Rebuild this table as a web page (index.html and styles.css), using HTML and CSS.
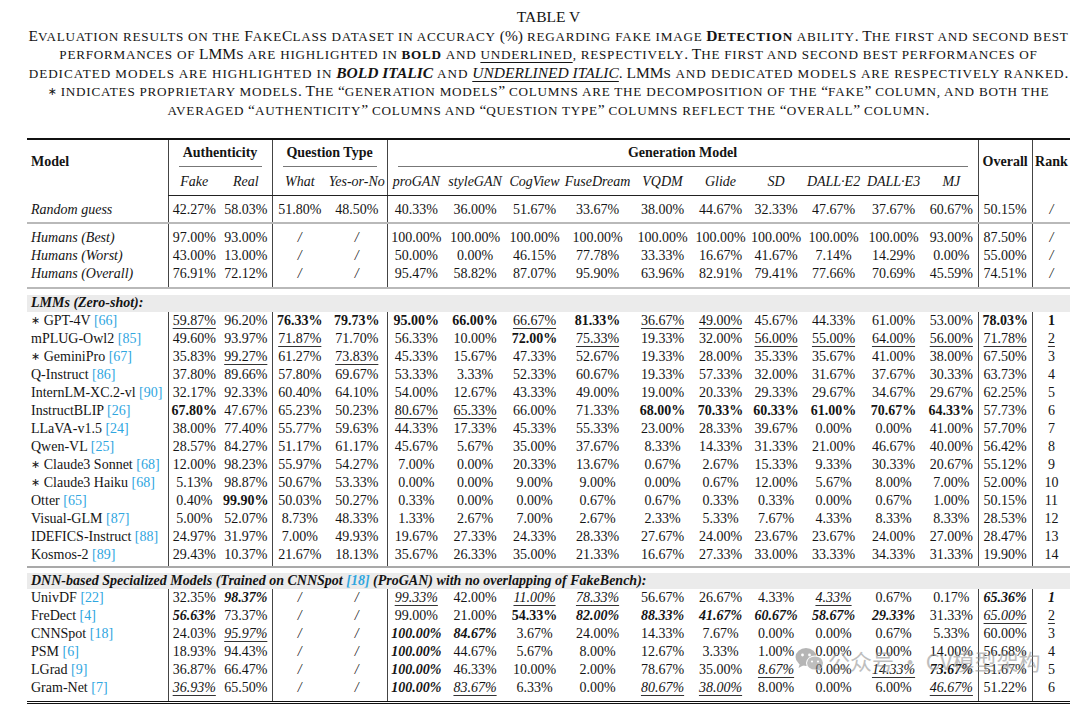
FILE: index.html
```html
<!DOCTYPE html>
<html>
<head>
<meta charset="utf-8">
<link rel="stylesheet" href="styles.css">
</head>
<body>
<div class="page">
  <div class="title">TABLE V</div>
  <div class="caption">
    <span class="ln">E<span class="s">valuation results on the</span> F<span class="s">ake</span>C<span class="s">lass dataset in accuracy</span> (%) <span class="s">regarding fake image</span> <b>D<span class="s">etection</span></b> <span class="s">ability</span>. T<span class="s">he first and second best</span></span>
    <span class="ln"><span class="s">performances of</span> LMM<span class="s">s are highlighted in</span> <b><span class="s">bold</span></b> <span class="s">and</span> <span class="cu"><span class="s">underlined</span></span><span class="s">, respectively</span>. T<span class="s">he first and second best performances of</span></span>
    <span class="ln wide"><span class="s">dedicated models are highlighted in</span> <b class="cap-bi">bold italic</b> <span class="s">and</span> <span class="cap-ui">underlined italic</span>. LMM<span class="s">s and dedicated models are respectively ranked</span>.</span>
    <span class="ln"><span class="ast">∗</span> <span class="s">indicates proprietary models</span>. T<span class="s">he</span> “<span class="s">generation models</span>” <span class="s">columns are the decomposition of the</span> “<span class="s">fake</span>” <span class="s">column, and both the</span></span>
    <span class="ln"><span class="s">averaged</span> “<span class="s">authenticity</span>” <span class="s">columns and</span> “<span class="s">question type</span>” <span class="s">columns reflect the</span> “<span class="s">overall</span>” <span class="s">column</span>.</span>
  </div>

  <table class="tbl">
    <colgroup>
      <col style="width:141px"><col style="width:52px"><col style="width:52px"><col style="width:55px"><col style="width:60px">
      <col style="width:58px"><col style="width:60px"><col style="width:59px"><col style="width:67px"><col style="width:63px">
      <col style="width:53px"><col style="width:58px"><col style="width:57px"><col style="width:63px"><col style="width:53px">
      <col style="width:54px"><col style="width:38px">
    </colgroup>
    <thead>
      <tr class="h1">
        <th rowspan="2" class="hm">Model</th>
        <th colspan="2" class="hg vb"><span class="cmid">Authenticity</span></th>
        <th colspan="2" class="hg vb"><span class="cmid">Question Type</span></th>
        <th colspan="10" class="hg vb"><span class="cmid">Generation Model</span></th>
        <th rowspan="2" class="hs vb">Overall</th>
        <th rowspan="2" class="hs vb">Rank</th>
      </tr>
      <tr class="h2">
        <th class="vb">Fake</th><th>Real</th>
        <th class="vb">What</th><th>Yes-or-No</th>
        <th class="vb">proGAN</th><th>styleGAN</th><th>CogView</th><th>FuseDream</th><th>VQDM</th><th>Glide</th><th>SD</th><th>DALL·E2</th><th>DALL·E3</th><th>MJ</th>
      </tr>
    </thead>
    <tbody>
      <tr class="d first last rgl">
        <td class="m it">Random guess</td><td>42.27%</td><td>58.03%</td><td>51.80%</td><td>48.50%</td>
        <td>40.33%</td><td>36.00%</td><td>51.67%</td><td>33.67%</td><td>38.00%</td><td>44.67%</td><td>32.33%</td><td>47.67%</td><td>37.67%</td><td>60.67%</td>
        <td>50.15%</td><td class="it">/</td>
      </tr>
      <tr class="d first">
        <td class="m it">Humans (Best)</td><td>97.00%</td><td>93.00%</td><td class="it">/</td><td class="it">/</td>
        <td>100.00%</td><td>100.00%</td><td>100.00%</td><td>100.00%</td><td>100.00%</td><td>100.00%</td><td>100.00%</td><td>100.00%</td><td>100.00%</td><td>93.00%</td>
        <td>87.50%</td><td class="it">/</td>
      </tr>
      <tr class="d">
        <td class="m it">Humans (Worst)</td><td>43.00%</td><td>13.00%</td><td class="it">/</td><td class="it">/</td>
        <td>50.00%</td><td>0.00%</td><td>46.15%</td><td>77.78%</td><td>33.33%</td><td>16.67%</td><td>41.67%</td><td>7.14%</td><td>14.29%</td><td>0.00%</td>
        <td>55.00%</td><td class="it">/</td>
      </tr>
      <tr class="d last hml">
        <td class="m it">Humans (Overall)</td><td>76.91%</td><td>72.12%</td><td class="it">/</td><td class="it">/</td>
        <td>95.47%</td><td>58.82%</td><td>87.07%</td><td>95.90%</td><td>63.96%</td><td>82.91%</td><td>79.41%</td><td>77.66%</td><td>70.69%</td><td>45.59%</td>
        <td>74.51%</td><td class="it">/</td>
      </tr>
      <tr class="gap g1"><td colspan="17"></td></tr>
      <tr class="band b1"><td colspan="17">LMMs (Zero-shot):</td></tr>

      <tr class="d">
        <td class="m"><span class="ast">∗</span> GPT-4V <span class="ref">[66]</span></td><td><span class="u">59.87%</span></td><td>96.20%</td><td class="b">76.33%</td><td class="b">79.73%</td>
        <td class="b">95.00%</td><td class="b">66.00%</td><td><span class="u">66.67%</span></td><td class="b">81.33%</td><td><span class="u">36.67%</span></td><td><span class="u">49.00%</span></td><td>45.67%</td><td>44.33%</td><td>61.00%</td><td>53.00%</td>
        <td class="b">78.03%</td><td class="b">1</td>
      </tr>
      <tr class="d">
        <td class="m">mPLUG-Owl2 <span class="ref">[85]</span></td><td>49.60%</td><td>93.97%</td><td><span class="u">71.87%</span></td><td>71.70%</td>
        <td>56.33%</td><td>10.00%</td><td class="b">72.00%</td><td><span class="u">75.33%</span></td><td>19.33%</td><td>32.00%</td><td><span class="u">56.00%</span></td><td><span class="u">55.00%</span></td><td><span class="u">64.00%</span></td><td><span class="u">56.00%</span></td>
        <td><span class="u">71.78%</span></td><td><span class="u">2</span></td>
      </tr>
      <tr class="d">
        <td class="m"><span class="ast">∗</span> GeminiPro <span class="ref">[67]</span></td><td>35.83%</td><td><span class="u">99.27%</span></td><td>61.27%</td><td><span class="u">73.83%</span></td>
        <td>45.33%</td><td>15.67%</td><td>47.33%</td><td>52.67%</td><td>19.33%</td><td>28.00%</td><td>35.33%</td><td>35.67%</td><td>41.00%</td><td>38.00%</td>
        <td>67.50%</td><td>3</td>
      </tr>
      <tr class="d">
        <td class="m">Q-Instruct <span class="ref">[86]</span></td><td>37.80%</td><td>89.66%</td><td>57.80%</td><td>69.67%</td>
        <td>53.33%</td><td>3.33%</td><td>52.33%</td><td>60.67%</td><td>19.33%</td><td>57.33%</td><td>32.00%</td><td>31.67%</td><td>37.67%</td><td>30.33%</td>
        <td>63.73%</td><td>4</td>
      </tr>
      <tr class="d">
        <td class="m">InternLM-XC.2-vl <span class="ref">[90]</span></td><td>32.17%</td><td>92.33%</td><td>60.40%</td><td>64.10%</td>
        <td>54.00%</td><td>12.67%</td><td>43.33%</td><td>49.00%</td><td>19.00%</td><td>20.33%</td><td>29.33%</td><td>29.67%</td><td>34.67%</td><td>29.67%</td>
        <td>62.25%</td><td>5</td>
      </tr>
      <tr class="d">
        <td class="m">InstructBLIP <span class="ref">[26]</span></td><td class="b">67.80%</td><td>47.67%</td><td>65.23%</td><td>50.23%</td>
        <td><span class="u">80.67%</span></td><td><span class="u">65.33%</span></td><td>66.00%</td><td>71.33%</td><td class="b">68.00%</td><td class="b">70.33%</td><td class="b">60.33%</td><td class="b">61.00%</td><td class="b">70.67%</td><td class="b">64.33%</td>
        <td>57.73%</td><td>6</td>
      </tr>
      <tr class="d">
        <td class="m">LLaVA-v1.5 <span class="ref">[24]</span></td><td>38.00%</td><td>77.40%</td><td>55.77%</td><td>59.63%</td>
        <td>44.33%</td><td>17.33%</td><td>45.33%</td><td>55.33%</td><td>23.00%</td><td>28.33%</td><td>39.67%</td><td>0.00%</td><td>0.00%</td><td>41.00%</td>
        <td>57.70%</td><td>7</td>
      </tr>
      <tr class="d">
        <td class="m">Qwen-VL <span class="ref">[25]</span></td><td>28.57%</td><td>84.27%</td><td>51.17%</td><td>61.17%</td>
        <td>45.67%</td><td>5.67%</td><td>35.00%</td><td>37.67%</td><td>8.33%</td><td>14.33%</td><td>31.33%</td><td>21.00%</td><td>46.67%</td><td>40.00%</td>
        <td>56.42%</td><td>8</td>
      </tr>
      <tr class="d">
        <td class="m"><span class="ast">∗</span> Claude3 Sonnet <span class="ref">[68]</span></td><td>12.00%</td><td>98.23%</td><td>55.97%</td><td>54.27%</td>
        <td>7.00%</td><td>0.00%</td><td>20.33%</td><td>13.67%</td><td>0.67%</td><td>2.67%</td><td>15.33%</td><td>9.33%</td><td>30.33%</td><td>20.67%</td>
        <td>55.12%</td><td>9</td>
      </tr>
      <tr class="d">
        <td class="m"><span class="ast">∗</span> Claude3 Haiku <span class="ref">[68]</span></td><td>5.13%</td><td>98.87%</td><td>50.67%</td><td>53.33%</td>
        <td>0.00%</td><td>0.00%</td><td>9.00%</td><td>9.00%</td><td>0.00%</td><td>0.67%</td><td>12.00%</td><td>5.67%</td><td>8.00%</td><td>7.00%</td>
        <td>52.00%</td><td>10</td>
      </tr>
      <tr class="d">
        <td class="m">Otter <span class="ref">[65]</span></td><td>0.40%</td><td class="b">99.90%</td><td>50.03%</td><td>50.27%</td>
        <td>0.33%</td><td>0.00%</td><td>0.00%</td><td>0.67%</td><td>0.67%</td><td>0.33%</td><td>0.33%</td><td>0.00%</td><td>0.67%</td><td>1.00%</td>
        <td>50.15%</td><td>11</td>
      </tr>
      <tr class="d">
        <td class="m">Visual-GLM <span class="ref">[87]</span></td><td>5.00%</td><td>52.07%</td><td>8.73%</td><td>48.33%</td>
        <td>1.33%</td><td>2.67%</td><td>7.00%</td><td>2.67%</td><td>2.33%</td><td>5.33%</td><td>7.67%</td><td>4.33%</td><td>8.33%</td><td>8.33%</td>
        <td>28.53%</td><td>12</td>
      </tr>
      <tr class="d">
        <td class="m">IDEFICS-Instruct <span class="ref">[88]</span></td><td>24.97%</td><td>31.97%</td><td>7.00%</td><td>49.93%</td>
        <td>19.67%</td><td>27.33%</td><td>24.33%</td><td>28.33%</td><td>27.67%</td><td>24.00%</td><td>23.67%</td><td>23.67%</td><td>24.00%</td><td>27.00%</td>
        <td>28.47%</td><td>13</td>
      </tr>
      <tr class="d last lml">
        <td class="m">Kosmos-2 <span class="ref">[89]</span></td><td>29.43%</td><td>10.37%</td><td>21.67%</td><td>18.13%</td>
        <td>35.67%</td><td>26.33%</td><td>35.00%</td><td>21.33%</td><td>16.67%</td><td>27.33%</td><td>33.00%</td><td>33.33%</td><td>34.33%</td><td>31.33%</td>
        <td>19.90%</td><td>14</td>
      </tr>
      <tr class="gap g2"><td colspan="17"></td></tr>
      <tr class="band b2"><td colspan="17">DNN-based Specialized Models (Trained on CNNSpot <span class="ref">[18]</span> (ProGAN) with no overlapping of FakeBench):</td></tr>

      <tr class="d">
        <td class="m">UnivDF <span class="ref">[22]</span></td><td>32.35%</td><td class="bi">98.37%</td><td class="it">/</td><td class="it">/</td>
        <td><span class="ui">99.33%</span></td><td>42.00%</td><td><span class="ui">11.00%</span></td><td><span class="ui">78.33%</span></td><td>56.67%</td><td>26.67%</td><td>4.33%</td><td><span class="ui">4.33%</span></td><td>0.67%</td><td>0.17%</td>
        <td class="bi">65.36%</td><td class="bi">1</td>
      </tr>
      <tr class="d">
        <td class="m">FreDect <span class="ref">[4]</span></td><td class="bi">56.63%</td><td>73.37%</td><td class="it">/</td><td class="it">/</td>
        <td>99.00%</td><td>21.00%</td><td class="b">54.33%</td><td class="bi">82.00%</td><td class="bi">88.33%</td><td class="bi">41.67%</td><td class="bi">60.67%</td><td class="bi">58.67%</td><td class="bi">29.33%</td><td>31.33%</td>
        <td><span class="ui">65.00%</span></td><td><span class="u">2</span></td>
      </tr>
      <tr class="d">
        <td class="m">CNNSpot <span class="ref">[18]</span></td><td>24.03%</td><td><span class="ui">95.97%</span></td><td class="it">/</td><td class="it">/</td>
        <td class="bi">100.00%</td><td class="bi">84.67%</td><td>3.67%</td><td>24.00%</td><td>14.33%</td><td>7.67%</td><td>0.00%</td><td>0.00%</td><td>0.67%</td><td>5.33%</td>
        <td>60.00%</td><td>3</td>
      </tr>
      <tr class="d">
        <td class="m">PSM <span class="ref">[6]</span></td><td>18.93%</td><td>94.43%</td><td class="it">/</td><td class="it">/</td>
        <td class="bi">100.00%</td><td>44.67%</td><td>5.67%</td><td>8.00%</td><td>12.67%</td><td>3.33%</td><td>1.00%</td><td>0.00%</td><td>0.00%</td><td>14.00%</td>
        <td>56.68%</td><td>4</td>
      </tr>
      <tr class="d">
        <td class="m">LGrad <span class="ref">[9]</span></td><td>36.87%</td><td>66.47%</td><td class="it">/</td><td class="it">/</td>
        <td class="bi">100.00%</td><td>46.33%</td><td>10.00%</td><td>2.00%</td><td>78.67%</td><td>35.00%</td><td><span class="ui">8.67%</span></td><td>0.00%</td><td><span class="ui">14.33%</span></td><td class="bi">73.67%</td>
        <td>51.67%</td><td>5</td>
      </tr>
      <tr class="d last dnl">
        <td class="m">Gram-Net <span class="ref">[7]</span></td><td><span class="ui">36.93%</span></td><td>65.50%</td><td class="it">/</td><td class="it">/</td>
        <td class="bi">100.00%</td><td><span class="ui">83.67%</span></td><td>6.33%</td><td>0.00%</td><td><span class="ui">80.67%</span></td><td><span class="ui">38.00%</span></td><td>8.00%</td><td>0.00%</td><td>6.00%</td><td><span class="ui">46.67%</span></td>
        <td>51.22%</td><td>6</td>
      </tr>
    </tbody>
  </table>
</div>

<div class="wm">
  <svg class="wm-icon" width="30" height="26" viewBox="0 0 30 26">
    <ellipse cx="11" cy="10" rx="10.5" ry="9" fill="#7a7a7a"/>
    <path d="M5 16 L3.5 21 L9 18 Z" fill="#7a7a7a"/>
    <circle cx="7.5" cy="8" r="1.4" fill="#fff"/>
    <circle cx="14.5" cy="8" r="1.4" fill="#fff"/>
    <ellipse cx="20" cy="16" rx="9" ry="7.5" fill="#fff"/>
    <ellipse cx="20" cy="16" rx="8" ry="6.6" fill="#8a8a8a"/>
    <path d="M24.5 20.5 L27 24.5 L21.5 22 Z" fill="#8a8a8a"/>
    <circle cx="17" cy="14.5" r="1.1" fill="#fff"/>
    <circle cx="23" cy="14.5" r="1.1" fill="#fff"/>
  </svg>
  <span class="wm-text">公众号 · CV模型架构</span>
</div>
</body>
</html>
```

FILE: styles.css
```css
html, body {
  margin: 0;
  padding: 0;
  background: #ffffff;
}

body {
  color: #141414;
  font-family: "Liberation Serif", "Times New Roman", serif;
  position: relative;
  width: 1080px;
  height: 711px;
  overflow: hidden;
}

.page {
  padding: 8px 0 0 27px;
  width: 1043px;
}

.title {
  text-align: center;
  font-size: 15.5px;
  line-height: 18.5px;
}

.caption {
  text-align: center;
  font-size: 15.5px;
  line-height: 18.5px;
}

.caption .ln {
  display: block;
  height: 18.5px;
  white-space: nowrap;
}

.caption .s {
  text-transform: uppercase;
  font-size: 0.85em;
  letter-spacing: 0.75px;
  line-height: 1;
}

.caption .wide .s {
  letter-spacing: 0.95px;
}

.caption .cu {
  text-decoration: underline;
  text-decoration-thickness: 1px;
  text-underline-offset: 3px;
}

.caption .cap-bi {
  font-style: italic;
  font-weight: bold;
  text-transform: uppercase;
}

.caption .cap-ui {
  font-style: italic;
  text-transform: uppercase;
  text-decoration: underline;
  text-decoration-thickness: 1px;
  text-underline-offset: 3px;
}

.ast {
  font-family: "DejaVu Sans", sans-serif;
  font-size: 11px;
  font-weight: normal;
  line-height: 1;
  vertical-align: 1px;
}

.tbl {
  margin-top: 19px;
  width: 1043px;
  table-layout: fixed;
  border-collapse: collapse;
  border-top: 2px solid #111;
  border-bottom: 3px double #111;
  font-size: 14px;
  line-height: 18px;
}

.tbl th,
.tbl td {
  padding: 0;
  text-align: center;
  white-space: nowrap;
}

/* header */
.h1 th {
  padding-top: 4px;
  padding-bottom: 1px;
  vertical-align: top;
}

.h1 .hm {
  text-align: left;
  padding-left: 4px;
  padding-top: 13px;
}

.h1 .hs {
  padding-top: 13px;
}

.cmid {
  display: block;
  margin: 0 10px;
  padding-bottom: 4px;
  border-bottom: 1px solid #777;
}

.h2 th {
  font-weight: normal;
  font-style: italic;
  padding-top: 5px;
  padding-bottom: 4px;
  border-bottom: 1px solid #222;
}

.vb {
  border-left: 1px solid #444;
}

/* body rows */
.d td:nth-child(2),
.d td:nth-child(4),
.d td:nth-child(6),
.d td:nth-child(16),
.d td:nth-child(17) {
  border-left: 1px solid #444;
}

.d .m {
  text-align: left;
  padding-left: 4px;
}

.d.first td {
  padding-top: 5px;
}

.rgl td {
  padding-bottom: 3px;
  border-bottom: 2px solid #b9b9b9;
}

.hml td {
  padding-bottom: 4px;
  border-bottom: 2px solid #b9b9b9;
}

.lml td {
  padding-bottom: 2px;
  border-bottom: 2px solid #a9a9a9;
}

.dnl td {
  padding-bottom: 4px;
}

.gap td {
  border: none;
  padding: 0;
}

.g1 td {
  height: 6px;
}

.g2 td {
  height: 5px;
}

.band td {
  background: #ebebeb;
  text-align: left;
  padding-left: 4px;
  font-weight: bold;
  font-style: italic;
  border: none;
}

.b1 td {
  line-height: 15px;
  padding-bottom: 2px;
}

.b2 td {
  line-height: 16px;
}

.it {
  font-style: italic;
}

.b {
  font-weight: bold;
}

.bi {
  font-weight: bold;
  font-style: italic;
}

.u,
.ui {
  text-decoration: underline;
  text-decoration-thickness: 1px;
  text-underline-offset: 3px;
  text-decoration-color: #333;
}

.ui {
  font-style: italic;
}

.ref {
  color: #2fa6df;
}

.band .ref {
  font-weight: bold;
}

/* watermark overlay */
.wm {
  position: absolute;
  left: 795px;
  top: 646px;
  display: flex;
  align-items: center;
  gap: 3px;
  opacity: 0.55;
  pointer-events: none;
}

.wm-text {
  font-family: "Noto Sans CJK SC", "Noto Sans", sans-serif;
  font-size: 22px;
  line-height: 28px;
  color: #8a8a8a;
}
```
